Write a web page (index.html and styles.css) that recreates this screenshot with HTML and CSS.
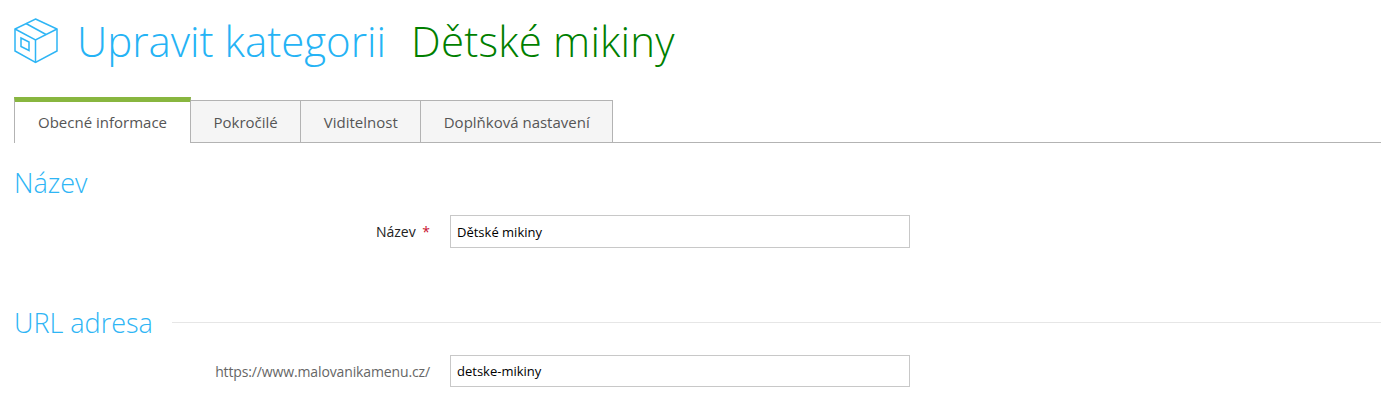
FILE: index.html
```html
<!DOCTYPE html>
<html lang="cs">
<head>
    <meta charset="UTF-8">
    <title>Upravit kategorii</title>
    <link rel="stylesheet" href="styles.css">
</head>
<body>
    <div class="page">
        <div class="page-title">
            <svg class="box-icon" width="44" height="46" viewBox="0 0 44 46" fill="none" stroke="#2eb5f5" stroke-width="1.5">
                <path d="M21.500 1 L43 11 V33 L21.500 44.500 L1 33 V11 Z"/>
                <path d="M1 11 L21.500 22 L43 11"/>
                <path d="M21.500 22 V44.500"/>
                <path d="M12 5.500 L32 16.500"/>
                <path d="M7 20 L15 24 V32.500 L7 28.500 Z"/>
            </svg>
            <h1>Upravit kategorii</h1>
            <span class="title-name">Dětské mikiny</span>
        </div>

        <ul class="tabs">
            <li class="tab active">Obecné informace</li>
            <li class="tab">Pokročilé</li>
            <li class="tab">Viditelnost</li>
            <li class="tab">Doplňková nastavení</li>
        </ul>

        <form>
            <section class="first">
                <h2><span>Název</span></h2>
                <div class="row">
                    <label class="required">Název <em>*</em></label>
                    <input type="text" value="Dětské mikiny">
                </div>
            </section>
            <section class="second">
                <h2><span>URL adresa</span><i></i></h2>
                <div class="row">
                    <label class="prefix">https://www.malovanikamenu.cz/</label>
                    <input type="text" value="detske-mikiny">
                </div>
            </section>
        </form>
    </div>
</body>
</html>
```

FILE: styles.css
```css
* {
    box-sizing: border-box;
}

html, body {
    height: 100%;
}

body {
    margin: 0;
    background: #fff;
    font-family: "Open Sans", sans-serif;
    font-size: 14px;
    color: #555;
    overflow: hidden;
}

.page {
    width: 1381px;
    padding-left: 14px;
}

.page-title {
    display: flex;
    align-items: center;
    height: 97px;
    padding-bottom: 16px;
}

.box-icon {
    flex: none;
    margin-right: 19px;
}

h1 {
    margin: 0 25px 0 0;
    font-size: 42px;
    font-weight: 300;
    line-height: 60px;
    color: #25b3f5;
}

.title-name {
    font-size: 42px;
    font-weight: 300;
    line-height: 60px;
    color: #007f00;
    letter-spacing: 0.2px;
}

.tabs {
    display: flex;
    align-items: flex-end;
    height: 46px;
    margin: 0;
    padding: 0;
    list-style: none;
    border-bottom: 1px solid #b3b3b3;
}

.tab {
    height: 43px;
    padding: 0 22.500px;
    margin-bottom: -1px;
    background: #f5f5f5;
    border: 1px solid #b3b3b3;
    border-left: 0;
    line-height: 43px;
    font-size: 15px;
    color: #555;
}

.tab.active {
    height: 46px;
    padding: 0 23px;
    background: #fff;
    border-top: 5px solid #88b63f;
    border-left: 1px solid #b3b3b3;
    border-right: 1px solid #b3b3b3;
    border-bottom: 0;
    line-height: 41px;
}

h2 {
    display: flex;
    align-items: center;
    margin: 0;
    height: 36px;
    font-size: 27px;
    font-weight: 300;
    color: #2eb5f5;
}

h2 i {
    flex: 1;
    height: 1px;
    margin-left: 19px;
    background: #e6e6e6;
}

section.first {
    padding-top: 21px;
}

section.second {
    padding-top: 56px;
}

.row {
    display: flex;
    align-items: center;
    margin-top: 15px;
}

.row label {
    width: 416px;
    text-align: right;
    font-size: 14px;
}

.required {
    color: #222;
}

.required em {
    margin-left: 3px;
    font-style: normal;
    color: #c8102e;
}

.prefix {
    color: #666;
    letter-spacing: -0.13px;
}

.row input {
    width: 460px;
    height: 33px;
    margin-left: 20px;
    padding: 0 6px;
    border: 1px solid #c8c8c8;
    background: #fff;
    font-family: "Open Sans", sans-serif;
    font-size: 13px;
    color: #000;
    outline: none;
}

section.second .row input {
    height: 32px;
}
```
